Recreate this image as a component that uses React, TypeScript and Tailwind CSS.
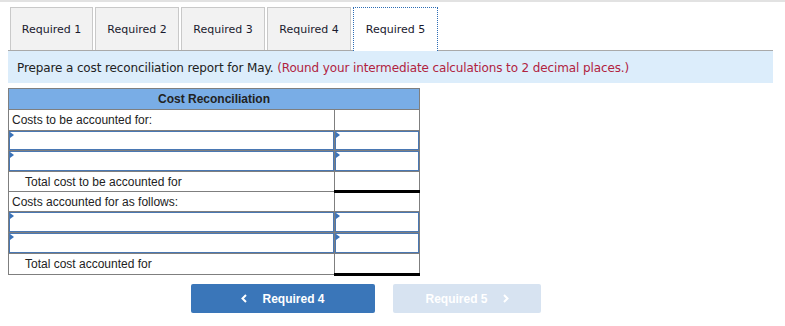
const tabs = [
  { label: "Required 1", w: "w-[83px]" },
  { label: "Required 2", w: "w-[84px]" },
  { label: "Required 3", w: "w-[84px]" },
  { label: "Required 4", w: "w-[84px]" },
];

function InputCell({ tall }: { tall?: boolean }) {
  return (
    <td className="border border-[#7f7f7f] p-0">
      <div
        className={`relative ${tall ? "h-[20px]" : "h-[19px]"} border border-[#4a78b3] bg-white`}
      >
        <span className="absolute left-0 top-0 h-0 w-0 border-y-[3px] border-l-[4px] border-y-transparent border-l-[#3a72b8]" />
      </div>
    </td>
  );
}

function LabelRow({ text, tall }: { text: string; tall?: boolean }) {
  return (
    <tr className={tall ? "h-[21px]" : "h-[20px]"}>
      <td className="border border-[#7f7f7f] py-0 pl-[3px] text-[12px] text-[#222]">
        {text}
      </td>
      <td className="border border-[#7f7f7f] p-0" />
    </tr>
  );
}

function TotalRow({ text, tall }: { text: string; tall?: boolean }) {
  return (
    <tr className={tall ? "h-[21px]" : "h-[20px]"}>
      <td className="border border-[#7f7f7f] py-0 pl-[16px] text-[12px] text-[#222]">
        {text}
      </td>
      <td className="border border-[#7f7f7f] border-t-black border-b-[3px] border-b-black p-0" />
    </tr>
  );
}

export default function App() {
  return (
    <div className="h-[326px] w-[785px] overflow-hidden border-t-2 border-[#e2e2e2] bg-white">
      <div className="ml-2 w-[765px]">
        {/* — Tabs — */}
        <div
          className="flex gap-[2px] border-b border-[#a9a9a9] pl-[2px] pt-[5px]"
          style={{ fontFamily: '"DejaVu Sans", Verdana, sans-serif' }}
        >
          {tabs.map((t) => (
            <div
              key={t.label}
              className={`${t.w} flex h-[43px] items-center justify-center border border-b-0 border-[#c9c9c9] bg-[#f2f2f2] pt-[2px] text-[11px] text-[#1a1a2e]`}
            >
              {t.label}
            </div>
          ))}
          <div className="-mb-px flex h-[44px] w-[85px] items-center justify-center border border-b-0 border-dotted border-[#2d6db5] bg-white pt-[2px] text-[11px] text-[#1a1a2e]">
            Required 5
          </div>
        </div>

        {/* — Instructions — */}
        <div
          className="flex h-[32px] items-center bg-[#dcedfb] pl-[9px] pt-[2px] text-[12px] tracking-[-0.12px] text-[#222]"
          style={{ fontFamily: '"DejaVu Sans", Verdana, sans-serif' }}
        >
          Prepare a cost reconciliation report for May.&nbsp;
          <span className="text-[#b1233f]">
            (Round your intermediate calculations to 2 decimal places.)
          </span>
        </div>

        {/* — Table — */}
        <table
          className="mt-[5px] w-[411px] table-fixed border-collapse border border-[#7f7f7f]"
          style={{ fontFamily: '"Liberation Sans", Arial, sans-serif' }}
        >
          <colgroup>
            <col className="w-[326px]" />
            <col className="w-[85px]" />
          </colgroup>
          <tbody>
            <tr className="h-[21px]">
              <th
                colSpan={2}
                className="border border-[#7f7f7f] bg-[#79ade6] p-0 text-center text-[12px] font-bold text-[#222]"
              >
                Cost Reconciliation
              </th>
            </tr>
            <LabelRow text="Costs to be accounted for:" tall />
            <tr className="h-[20px]">
              <InputCell />
              <InputCell />
            </tr>
            <tr className="h-[21px]">
              <InputCell tall />
              <InputCell tall />
            </tr>
            <TotalRow text="Total cost to be accounted for" />
            <LabelRow text="Costs accounted for as follows:" />
            <tr className="h-[21px]">
              <InputCell tall />
              <InputCell tall />
            </tr>
            <tr className="h-[21px]">
              <InputCell tall />
              <InputCell tall />
            </tr>
            <TotalRow text="Total cost accounted for" tall />
          </tbody>
        </table>

        {/* — Navigation — */}
        <div
          className="ml-[183px] mt-[8px] flex gap-[18px]"
          style={{ fontFamily: '"Liberation Sans", Arial, sans-serif' }}
        >
          <button className="flex h-[29px] w-[184px] items-center justify-center gap-[15px] rounded-[2px] bg-[#3a76b9] text-[12px] font-bold text-white">
            <svg width="6" height="9" viewBox="0 0 6 9">
              <path d="M5 1 L1.5 4.5 L5 8" fill="none" stroke="white" strokeWidth="2" />
            </svg>
            Required 4
          </button>
          <button className="flex h-[29px] w-[148px] items-center justify-center gap-[15px] rounded-[2px] bg-[#d7e3f1] text-[12px] font-bold text-white">
            Required 5
            <svg width="6" height="9" viewBox="0 0 6 9">
              <path d="M1 1 L4.5 4.5 L1 8" fill="none" stroke="white" strokeWidth="2" />
            </svg>
          </button>
        </div>
      </div>
    </div>
  );
}
